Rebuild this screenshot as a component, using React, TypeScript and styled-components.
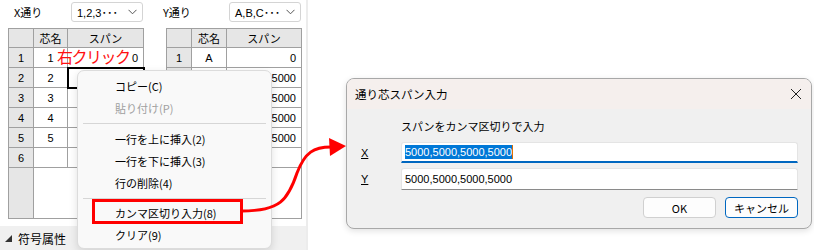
import React from "react";
import styled, { createGlobalStyle } from "styled-components";

const GlobalStyle = createGlobalStyle`
  html, body { margin: 0; padding: 0; background: #fff; }
  body { font-family: "Noto Sans CJK JP", "Liberation Sans", sans-serif; }
`;

const UI_FONT = `"Noto Sans CJK JP", "Liberation Sans", sans-serif`;
const NUM_FONT = `"Liberation Sans", "Noto Sans CJK JP", sans-serif`;

const Root = styled.div`
  position: relative;
  width: 814px;
  height: 250px;
  overflow: hidden;
  background: #fff;
  font-family: ${UI_FONT};
  color: #000;
`;

const LeftPanel = styled.div`
  width: 306px;
  height: 250px;
  display: flex;
  flex-direction: column;
  border-right: 2px solid #ececec;
`;

const Groups = styled.div`
  display: flex;
  gap: 22px;
  padding: 2px 0 0 8px;
`;

const Group = styled.div`
  display: flex;
  flex-direction: column;
  gap: 6px;
`;

const GroupHead = styled.div`
  display: flex;
  align-items: center;
  height: 20px;
`;

const Label = styled.span<{ $indent: number }>`
  width: ${(p) => 63 - p.$indent}px;
  margin-left: ${(p) => p.$indent}px;
  font-size: 11px;
  line-height: 20px;
`;

const Dropdown = styled.div`
  box-sizing: border-box;
  width: 72px;
  height: 20px;
  border: 1px solid #d4d4d4;
  border-radius: 3px;
  display: flex;
  align-items: center;
  justify-content: space-between;
  padding: 0 5px 0 5px;
  font-family: ${NUM_FONT};
  font-size: 11px;
  background: #fff;
`;

const Grid = styled.div<{ $cols: string }>`
  display: grid;
  grid-template-columns: ${(p) => p.$cols};
  grid-template-rows: 19px repeat(6, 20px) 51px;
  border-left: 1px solid #a0a0a0;
  border-top: 1px solid #a0a0a0;
  width: 135px;
`;

const Cell = styled.div<{ $kind?: "head" | "row" | "data"; $align?: string; $sel?: boolean; $span?: number }>`
  box-sizing: border-box;
  border-right: 1px solid #a0a0a0;
  border-bottom: 1px solid #a0a0a0;
  display: flex;
  align-items: center;
  justify-content: ${(p) => p.$align || "center"};
  padding: 0 5px;
  font-size: 11px;
  font-family: ${(p) => (p.$kind === "head" ? UI_FONT : NUM_FONT)};
  background: ${(p) => (p.$kind === "head" || p.$kind === "row" ? "#e6e6e6" : "#fff")};
  grid-column: ${(p) => (p.$span ? `span ${p.$span}` : "auto")};
  outline: ${(p) => (p.$sel ? "2px solid #000" : "none")};
  outline-offset: -1px;
  z-index: ${(p) => (p.$sel ? 1 : 0)};
`;

const BottomBar = styled.div`
  margin-top: auto;
  height: 24px;
  background: #f0f0f0;
  display: flex;
  align-items: center;
  gap: 6px;
  padding-left: 5px;
  font-size: 12px;
`;

const Menu = styled.div`
  position: absolute;
  left: 77px;
  top: 70px;
  width: 195px;
  box-sizing: border-box;
  padding: 4px 0 2px;
  background: #f9f9f9;
  border: 1px solid #dcdcdc;
  border-radius: 7px;
  box-shadow: 0 3px 8px rgba(0, 0, 0, 0.12);
  z-index: 5;
`;

const MenuItem = styled.div<{ $disabled?: boolean }>`
  height: 22px;
  line-height: 22px;
  padding-left: 37px;
  font-size: 11px;
  color: ${(p) => (p.$disabled ? "#a0a0a0" : "#000")};
`;

const MenuSep = styled.div<{ $h: number }>`
  height: ${(p) => p.$h}px;
  display: flex;
  align-items: center;
  padding: 0 5px;
  &::after {
    content: "";
    flex: 1;
    height: 1px;
    background: #d6d6d6;
  }
`;

const Annotation = styled.div`
  position: absolute;
  left: 57px;
  top: 47px;
  color: #ff1010;
  font-size: 16px;
  line-height: 18px;
  letter-spacing: -1.5px;
  z-index: 3;
`;

const RedBox = styled.div`
  position: absolute;
  left: 92px;
  top: 199px;
  width: 151px;
  height: 25px;
  box-sizing: border-box;
  border: 3px solid #ff0000;
  z-index: 6;
`;

const Overlay = styled.svg`
  position: absolute;
  left: 0;
  top: 0;
  z-index: 7;
  pointer-events: none;
`;

const Dialog = styled.div`
  position: absolute;
  left: 346px;
  top: 78px;
  width: 466px;
  box-sizing: border-box;
  border: 1px solid #a8a8a8;
  border-radius: 8px;
  overflow: hidden;
  background: #f0f0f0;
  box-shadow: 0 2px 6px rgba(0, 0, 0, 0.12);
  z-index: 4;
`;

const TitleBar = styled.div`
  height: 30px;
  background: #f5efed;
  display: flex;
  align-items: center;
  justify-content: space-between;
  padding: 0 9px 0 8px;
  font-size: 11.5px;
`;

const DialogBody = styled.div`
  display: grid;
  grid-template-columns: 40px 397px;
  row-gap: 5px;
  padding: 9px 13px 10px 14px;
`;

const Hint = styled.div`
  grid-column: 2;
  font-size: 11px;
  line-height: 16px;
  margin-bottom: 3px;
`;

const FieldLabel = styled.div`
  display: flex;
  align-items: center;
  font-family: ${NUM_FONT};
  font-size: 11px;
  text-decoration: underline;
`;

const Input = styled.div<{ $focus?: boolean }>`
  box-sizing: border-box;
  height: ${(p) => (p.$focus ? 21 : 22)}px;
  background: #fff;
  border: 1px solid #e4e4e4;
  border-bottom: ${(p) => (p.$focus ? "2px solid #0067c0" : "1px solid #8a8a8a")};
  border-radius: 3px 3px 0 0;
  display: flex;
  align-items: center;
  padding-left: 3px;
  font-family: ${NUM_FONT};
  font-size: 11px;
`;

const Selected = styled.span`
  background: #0078d7;
  color: #fff;
  border-right: 1px solid #e07000;
  line-height: 14px;
`;

const Buttons = styled.div`
  grid-column: 1 / span 2;
  display: flex;
  justify-content: flex-end;
  gap: 9px;
  margin-top: 2px;
`;

const Button = styled.div<{ $primary?: boolean }>`
  box-sizing: border-box;
  width: 73px;
  height: 21px;
  border: ${(p) => (p.$primary ? "1.5px solid #0067c0" : "1px solid #d0d0d0")};
  border-radius: 4px;
  background: #fdfdfd;
  display: flex;
  align-items: center;
  justify-content: center;
  font-size: 11px;
`;

type Row = [string, string, string];

const xRows: Row[] = [
  ["1", "1", "0"],
  ["2", "2", ""],
  ["3", "3", ""],
  ["4", "4", ""],
  ["5", "5", ""],
  ["6", "", ""],
];

// rows 2-5 of the Y grid sit under the context menu, only the span shows
const yRows: Row[] = [
  ["1", "A", "0"],
  ["", "", "5000"],
  ["", "", "5000"],
  ["", "", "5000"],
  ["", "", "5000"],
  ["", "", ""],
];

const Chevron = () => (
  <svg width="9" height="6" viewBox="0 0 9 6">
    <path d="M0.5 0.8 L4.5 4.8 L8.5 0.8" fill="none" stroke="#555" strokeWidth="1" />
  </svg>
);

const SpanGrid = ({ rows, cols, selRow }: { rows: Row[]; cols: string; selRow?: number }) => (
  <Grid $cols={cols}>
    <Cell $kind="head" />
    <Cell $kind="head">芯名</Cell>
    <Cell $kind="head">スパン</Cell>
    {rows.map((r, i) => (
      <React.Fragment key={i}>
        <Cell $kind="row">{r[0]}</Cell>
        <Cell>{r[1]}</Cell>
        <Cell $align="flex-end" $sel={selRow === i}>{r[2]}</Cell>
      </React.Fragment>
    ))}
    <Cell $kind="row" />
    <Cell $span={2} />
  </Grid>
);

export default function App() {
  return (
    <Root>
      <GlobalStyle />
      <LeftPanel>
        <Groups>
          <Group>
            <GroupHead>
              <Label $indent={6}>X通り</Label>
              <Dropdown>
                <span>1,2,3･･･</span>
                <Chevron />
              </Dropdown>
            </GroupHead>
            <SpanGrid rows={xRows} cols="25px 34px 76px" selRow={1} />
          </Group>
          <Group>
            <GroupHead>
              <Label $indent={-3}>Y通り</Label>
              <Dropdown>
                <span>A,B,C･･･</span>
                <Chevron />
              </Dropdown>
            </GroupHead>
            <SpanGrid rows={yRows} cols="25px 35px 75px" />
          </Group>
        </Groups>
        <BottomBar>
          <svg width="7" height="7" viewBox="0 0 7 7">
            <path d="M7 0 L7 7 L0 7 Z" fill="#333" />
          </svg>
          <span>符号属性</span>
        </BottomBar>
      </LeftPanel>

      <Annotation>右クリック</Annotation>

      <Menu>
        <MenuItem>コピー(C)</MenuItem>
        <MenuItem $disabled>貼り付け(P)</MenuItem>
        <MenuSep $h={9} />
        <MenuItem>一行を上に挿入(2)</MenuItem>
        <MenuItem>一行を下に挿入(3)</MenuItem>
        <MenuItem>行の削除(4)</MenuItem>
        <MenuSep $h={8} />
        <MenuItem>カンマ区切り入力(8)</MenuItem>
        <MenuItem>クリア(9)</MenuItem>
      </Menu>
      <RedBox />

      <Dialog>
        <TitleBar>
          <span>通り芯スパン入力</span>
          <svg width="12" height="12" viewBox="0 0 12 12">
            <path d="M1 1 L11 11 M11 1 L1 11" stroke="#222" strokeWidth="1" />
          </svg>
        </TitleBar>
        <DialogBody>
          <Hint>スパンをカンマ区切りで入力</Hint>
          <FieldLabel>X</FieldLabel>
          <Input $focus>
            <Selected>5000,5000,5000,5000</Selected>
          </Input>
          <FieldLabel>Y</FieldLabel>
          <Input>5000,5000,5000,5000</Input>
          <Buttons>
            <Button>OK</Button>
            <Button $primary>キャンセル</Button>
          </Buttons>
        </DialogBody>
      </Dialog>

      <Overlay width="814" height="250" viewBox="0 0 814 250">
        <path
          d="M242 211 C280 211, 288 200, 297 173 C305 152, 314 147, 331 147"
          fill="none"
          stroke="#ff0000"
          strokeWidth="3"
        />
        <path d="M329 138 L346 146 L330 156 Z" fill="#ff0000" />
      </Overlay>
    </Root>
  );
}
